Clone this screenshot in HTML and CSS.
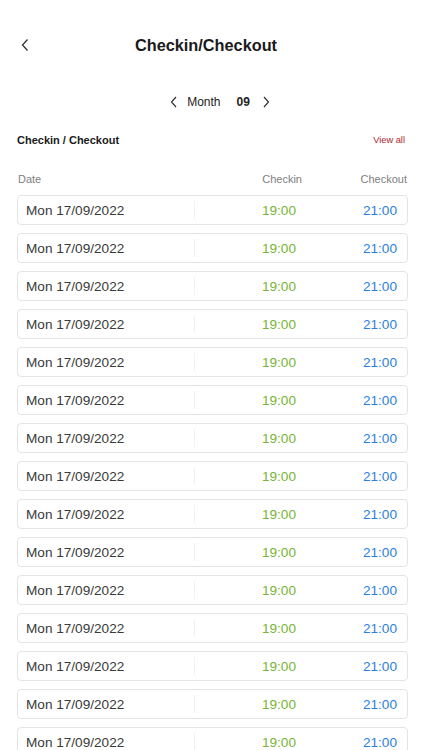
FILE: index.html
```html
<!DOCTYPE html>
<html lang="en">
  <head>
    <meta charset="UTF-8" />
    <meta name="viewport" content="width=device-width, initial-scale=1.0" />
    <title>Checkin/Checkout</title>
    <link rel="stylesheet" href="styles.css">
  </head>
  <body>
    <div class="topbar">
      <span class="back">
        <svg width="10" height="14" viewBox="0 0 10 14"><path d="M7.5 1.5 L2.5 7 L7.5 12.5" fill="none" stroke="#333" stroke-width="1.3"/></svg>
      </span>
      <h1>Checkin/Checkout</h1>
    </div>

    <div class="month">
      <svg width="8" height="12" viewBox="0 0 8 12"><path d="M6 1 L1.5 6 L6 11" fill="none" stroke="#333" stroke-width="1.2"/></svg>
      <span class="month-label">Month</span>
      <span class="month-num">09</span>
      <svg width="8" height="12" viewBox="0 0 8 12"><path d="M2 1 L6.5 6 L2 11" fill="none" stroke="#333" stroke-width="1.2"/></svg>
    </div>

    <div class="section-head">
      <span class="section-title">Checkin / Checkout</span>
      <span class="view-all">View all</span>
    </div>

    <div class="table-head">
      <span>Date</span>
      <span class="right">Checkin</span>
      <span class="right">Checkout</span>
    </div>

    <ul class="rows" id="rows"></ul>

    <script>
      // fill the list with the same record
      var rows = document.getElementById("rows");
      for (var i = 0; i < 15; i++) {
        var li = document.createElement("li");
        li.innerHTML =
          '<span class="date">Mon 17/09/2022</span>' +
          '<span class="divider"></span>' +
          '<span class="checkin">19:00</span>' +
          '<span class="checkout">21:00</span>';
        rows.appendChild(li);
      }
    </script>
  </body>
</html>
```
FILE: styles.css
```css
body {
  margin: 0;
  width: 422px;
  height: 750px;
  overflow: hidden;
  background: #fff;
  font-family: "Liberation Sans", Arial, sans-serif;
  color: #222;
}

/* top bar */
.topbar {
  position: relative;
  height: 90px;
  display: flex;
  align-items: center;
  justify-content: center;
  padding-right: 10px;
}
.back {
  position: absolute;
  left: 20px;
  top: 38px;
}
.topbar h1 {
  margin: 0;
  font-size: 16.3px;
  font-weight: bold;
  color: #1a1a1a;
}

/* month switcher */
.month {
  height: 24px;
  display: flex;
  align-items: center;
  justify-content: center;
  font-size: 12px;
  padding-left: 18px;
}
.month-label {
  margin: 0 16px 0 9px;
}
.month-num {
  font-weight: bold;
  margin-right: 12px;
}

/* section title */
.section-head {
  margin: 14px 17px 0 17px;
  height: 24px;
  display: flex;
  align-items: center;
  justify-content: space-between;
}
.section-title {
  font-size: 11px;
  font-weight: bold;
  color: #1a1a1a;
}
.view-all {
  font-size: 9.3px;
  color: #b2262e;
}

/* table header */
.table-head {
  margin: 15px 15px 0 17px;
  padding-left: 1px;
  height: 24px;
  display: grid;
  grid-template-columns: 1fr 60px 105px;
  align-items: center;
  font-size: 11px;
  color: #808080;
}
.right {
  text-align: right;
}

/* rows */
.rows {
  list-style: none;
  margin: 4px 14px 0 17px;
  padding: 0;
  display: flex;
  flex-direction: column;
  gap: 8px;
}
.rows li {
  height: 28px;
  border: 1px solid #e4e4e4;
  border-radius: 4px;
  padding: 0 10px 0 8px;
  display: grid;
  grid-template-columns: 1fr 1px 101px 101px;
  align-items: center;
  font-size: 13.6px;
}
.date {
  color: #3a3a3a;
}
.divider {
  height: 18px;
  background: #f2f2f2;
}
.checkin {
  text-align: right;
  color: #78b437;
}
.checkout {
  text-align: right;
  color: #2b7fe0;
}
```
